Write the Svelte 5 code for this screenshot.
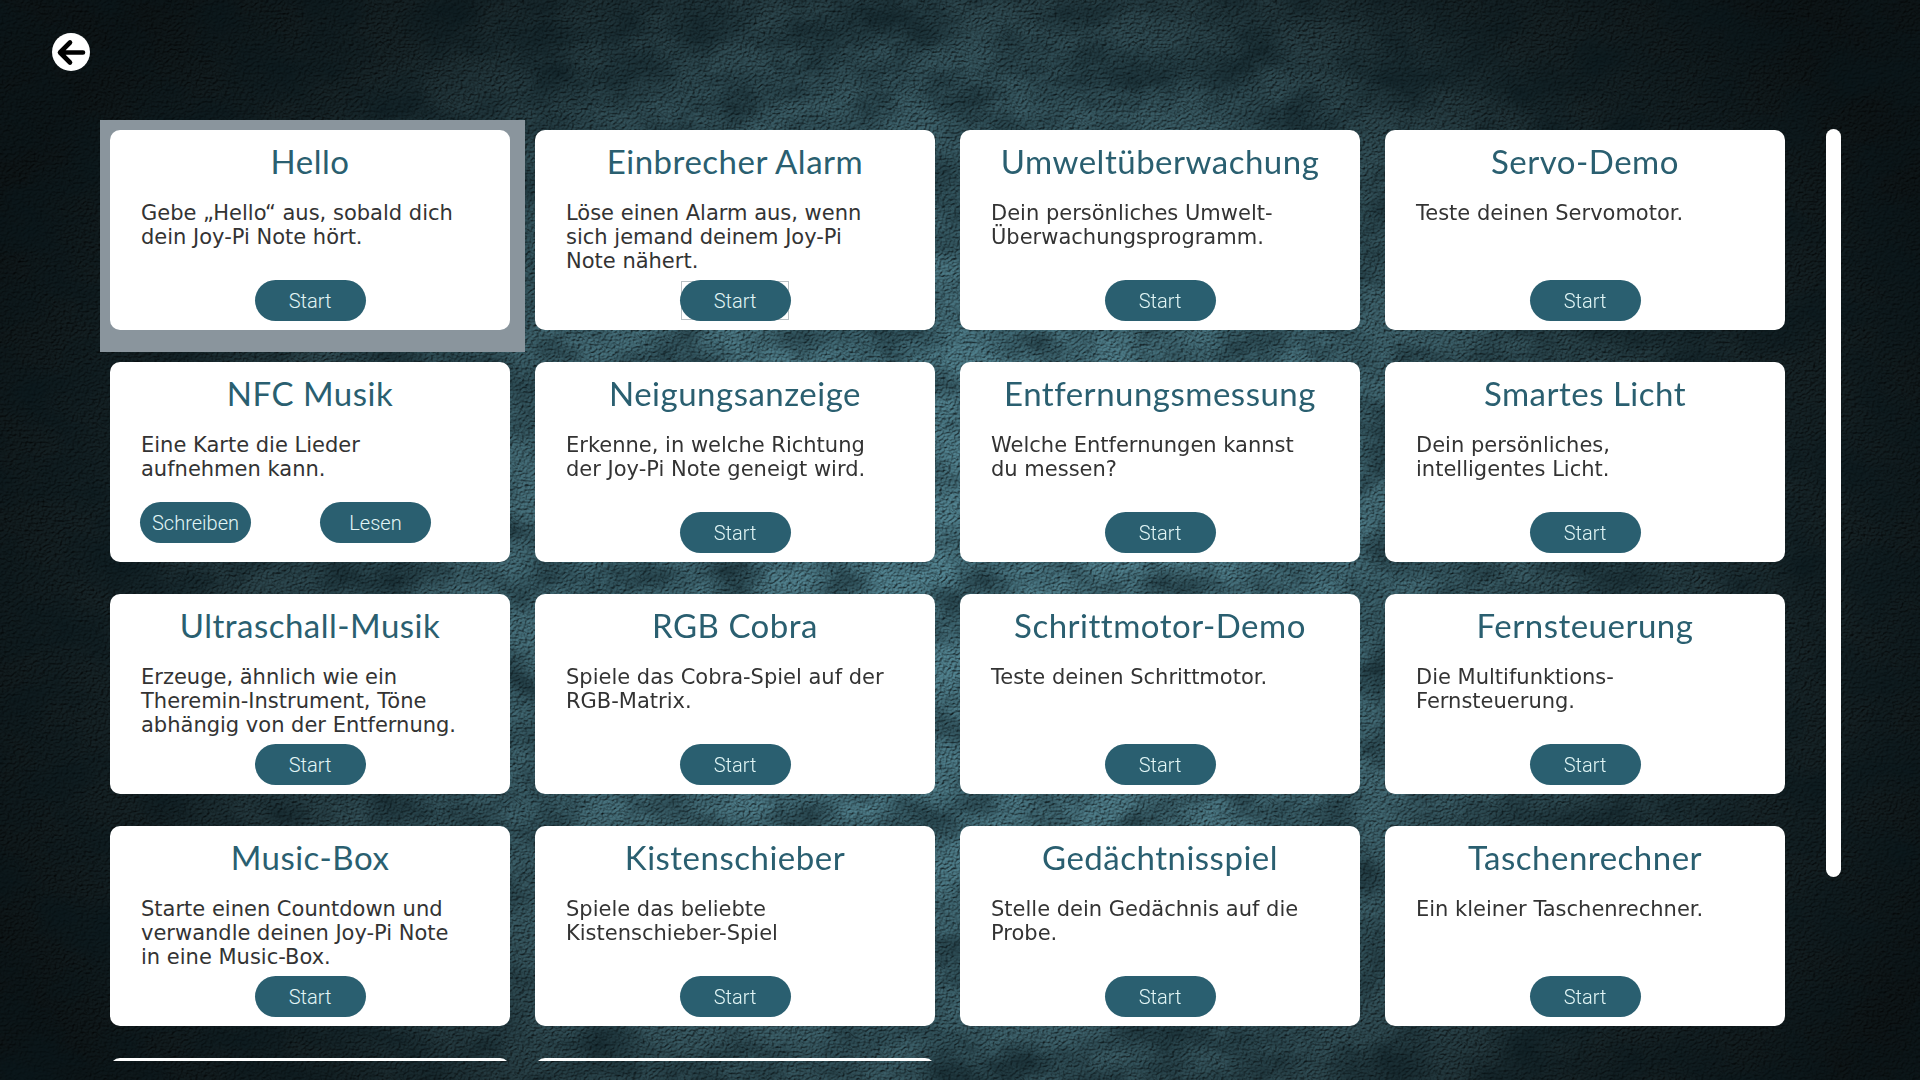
<script>
  const apps = [
    { title: 'Hello', text: 'Gebe „Hello“ aus, sobald dich dein Joy-Pi Note hört.', selected: true },
    { title: 'Einbrecher Alarm', text: 'Löse einen Alarm aus, wenn sich jemand deinem Joy-Pi Note nähert.', hovered: true },
    { title: 'Umweltüberwachung', text: 'Dein persönliches Umwelt-Überwachungsprogramm.' },
    { title: 'Servo-Demo', text: 'Teste deinen Servomotor.' },
    { title: 'NFC Musik', text: 'Eine Karte die Lieder aufnehmen kann.', actions: ['Schreiben', 'Lesen'] },
    { title: 'Neigungsanzeige', text: 'Erkenne, in welche Richtung der Joy-Pi Note geneigt wird.' },
    { title: 'Entfernungsmessung', text: 'Welche Entfernungen kannst du messen?' },
    { title: 'Smartes Licht', text: 'Dein persönliches, intelligentes Licht.' },
    { title: 'Ultraschall-Musik', text: 'Erzeuge, ähnlich wie ein Theremin-Instrument, Töne abhängig von der Entfernung.' },
    { title: 'RGB Cobra', text: 'Spiele das Cobra-Spiel auf der RGB-Matrix.' },
    { title: 'Schrittmotor-Demo', text: 'Teste deinen Schrittmotor.' },
    { title: 'Fernsteuerung', text: 'Die Multifunktions-Fernsteuerung.' },
    { title: 'Music-Box', text: 'Starte einen Countdown und verwandle deinen Joy-Pi Note in eine Music-Box.' },
    { title: 'Kistenschieber', text: 'Spiele das beliebte Kistenschieber-Spiel' },
    { title: 'Gedächtnisspiel', text: 'Stelle dein Gedächnis auf die Probe.' },
    { title: 'Taschenrechner', text: 'Ein kleiner Taschenrechner.' },
    { title: '' },
    { title: '' }
  ];
</script>

<svg class="wall" width="1920" height="1080" aria-hidden="true">
  <defs>
    <filter id="stone" x="0" y="0" width="100%" height="100%" color-interpolation-filters="sRGB">
      <feTurbulence type="fractalNoise" baseFrequency="0.34 0.42" numOctaves="3" seed="8" result="grain" />
      <feDiffuseLighting in="grain" surfaceScale="2.1" diffuseConstant="1.2" lighting-color="#50808d" result="lit">
        <feDistantLight azimuth="235" elevation="60" />
      </feDiffuseLighting>
      <feComposite in="lit" in2="SourceGraphic" operator="arithmetic" k1="1" k2="0" k3="0" k4="0" />
    </filter>
    <filter id="mottle" x="0" y="0" width="100%" height="100%" color-interpolation-filters="sRGB">
      <feTurbulence type="fractalNoise" baseFrequency="0.014 0.02" numOctaves="5" seed="21" />
      <feColorMatrix values="0 0 0 0 0.03  0 0 0 0 0.09  0 0 0 0 0.11  1.2 0 0 0 -0.42" />
    </filter>
    <radialGradient id="light" cx="0.5" cy="0.54" r="0.55" gradientTransform="translate(0.5 0.54) scale(1 1.5) translate(-0.5 -0.54)">
      <stop offset="0" stop-color="#e2e2e2" />
      <stop offset="0.35" stop-color="#cfcfcf" />
      <stop offset="0.6" stop-color="#8e8e8e" />
      <stop offset="0.8" stop-color="#3e3e3e" />
      <stop offset="1" stop-color="#242424" />
    </radialGradient>
  </defs>
  <rect width="1920" height="1080" fill="url(#light)" filter="url(#stone)" />
  <rect width="1920" height="1080" filter="url(#mottle)" />
</svg>

<div class="page">
  <header class="top">
    <button class="back" aria-label="Zurück">
      <svg viewBox="0 0 38 38" width="38" height="38">
        <circle cx="19" cy="19" r="19" fill="#fff" />
        <path d="M31 19.5H9M18 9.5 8 19.5 18 29.5" fill="none" stroke="#000" stroke-width="4.6" stroke-linecap="round" stroke-linejoin="round" />
      </svg>
    </button>
  </header>

  <main class="content">
    <div class="grid">
      {#each apps as app}
        <div class="cell" class:selected={app.selected}>
          <section class="card">
            {#if app.title}
              <h2>{app.title}</h2>
              <p>{app.text}</p>
              {#if app.actions}
                <div class="actions split">
                  {#each app.actions as label}
                    <button class="pill">{label}</button>
                  {/each}
                </div>
              {:else}
                <div class="actions">
                  <button class="pill" class:hovered={app.hovered}>Start</button>
                </div>
              {/if}
            {/if}
          </section>
        </div>
      {/each}
    </div>
    <div class="thumb"></div>
  </main>
</div>

<style>
  :global(body) {
    margin: 0;
    background: #0a1a20;
    overflow: hidden;
  }
  .wall {
    position: fixed;
    inset: 0;
    z-index: -1;
  }
  .page {
    width: 1920px;
    height: 1080px;
    overflow: hidden;
  }
  .top {
    height: 120px;
    padding: 33px 0 0 52px;
    box-sizing: border-box;
  }
  .back {
    display: block;
    width: 38px;
    height: 38px;
    padding: 0;
    border: none;
    background: none;
  }
  .back svg {
    display: block;
  }
  .content {
    display: flex;
    align-items: flex-start;
    height: 941px;
    padding-left: 100px;
  }
  .grid {
    display: grid;
    grid-template-columns: repeat(4, 425px);
    grid-auto-rows: 232px;
    height: 941px;
    overflow: hidden;
  }
  .cell {
    padding: 10px 15px 22px 10px;
    box-sizing: border-box;
  }
  .cell.selected {
    background: #8a959d;
  }
  .card {
    display: flex;
    flex-direction: column;
    isolation: isolate;
    height: 200px;
    box-sizing: border-box;
    padding: 0 0 9px 31px;
    background: #fff;
    border-radius: 10px;
  }
  h2 {
    margin: 11px 0 0 -31px;
    height: 41px;
    font-family: Lato, "Open Sans", sans-serif;
    font-size: 33px;
    font-weight: 400;
    line-height: 40px;
    letter-spacing: 0.5px;
    color: #2a5f70;
    text-align: center;
    white-space: nowrap;
  }
  p {
    flex: 1;
    width: 325px;
    margin: 19px 0 0;
    font-family: "DejaVu Sans", sans-serif;
    font-size: 21px;
    line-height: 24px;
    color: #333;
  }
  .actions {
    display: flex;
    justify-content: center;
    margin-left: -31px;
  }
  .actions.split {
    justify-content: flex-start;
    gap: 69px;
    margin: 0 0 10px -1px;
  }
  .pill {
    position: relative;
    width: 111px;
    height: 41px;
    padding: 0;
    border: none;
    border-radius: 21px;
    background: #2a5f70;
    font-family: Roboto, sans-serif;
    font-size: 20px;
    font-weight: 300;
    color: #e2f6f6;
  }
  .pill.hovered::after {
    content: '';
    position: absolute;
    z-index: -1;
    top: 1px;
    bottom: 1px;
    left: 1px;
    right: 2px;
    border: 1px solid #b9c0c4;
  }
  .thumb {
    flex: none;
    width: 15px;
    height: 748px;
    margin: 9px 0 0 26px;
    background: #fff;
    border-radius: 8px;
  }
</style>
